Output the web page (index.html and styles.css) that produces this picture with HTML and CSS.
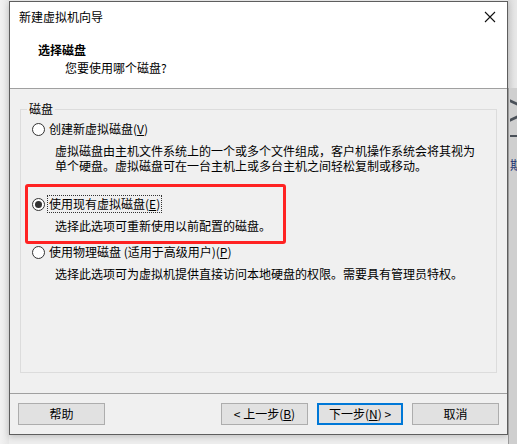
FILE: index.html
```html
<!DOCTYPE html>
<html lang="zh-CN">
<head>
<meta charset="utf-8">
<link rel="stylesheet" href="styles.css">
</head>
<body>
<div class="desk">
  <div class="side-left"></div>
  <div class="win">
    <div class="titlebar">
      <span class="title">新建虚拟机向导</span>
      <svg class="close" width="12" height="12" viewBox="0 0 12 12"><path d="M1 1L11 11M11 1L1 11" stroke="#111" stroke-width="1.1" fill="none"/></svg>
    </div>
    <div class="header">
      <div class="h-title">选择磁盘</div>
      <div class="h-sub">您要使用哪个磁盘?</div>
    </div>
    <div class="content">
      <fieldset class="group">
        <legend>磁盘</legend>
        <div class="group-body">
          <div class="radio-row r1"><span class="radio"></span><span class="lbl">创建新虚拟磁盘(<u>V</u>)</span></div>
          <div class="desc d1">虚拟磁盘由主机文件系统上的一个或多个文件组成，客户机操作系统会将其视为<br>单个硬盘。虚拟磁盘可在一台主机上或多台主机之间轻松复制或移动。</div>
          <div class="radio-row r2"><span class="radio on"></span><span class="lbl focus">使用现有虚拟磁盘(<u>E</u>)</span></div>
          <div class="desc d2">选择此选项可重新使用以前配置的磁盘。</div>
          <div class="radio-row r3"><span class="radio"></span><span class="lbl">使用物理磁盘 (适用于高级用户)(<u>P</u>)</span></div>
          <div class="desc d3">选择此选项可为虚拟机提供直接访问本地硬盘的权限。需要具有管理员特权。</div>
        </div>
      </fieldset>
      <div class="redbox"></div>
    </div>
    <div class="footer">
      <button class="btn help">帮助</button>
      <span class="spacer"></span>
      <button class="btn">&lt; 上一步(<u>B</u>)</button>
      <button class="btn primary">下一步(<u>N</u>) &gt;</button>
      <button class="btn">取消</button>
    </div>
  </div>
  <div class="side-right">
    <div class="sr-top"></div>
    <div class="sr-bar">
      <span class="mark m1"></span>
      <span class="mark m2"></span>
      <span class="mark m3"></span>
      <span class="sr-text">期</span>
    </div>
  </div>
</div>
</body>
</html>
```
FILE: styles.css
```css
* { box-sizing: border-box; }
html, body { margin: 0; padding: 0; }
body {
  width: 517px;
  height: 444px;
  overflow: hidden;
  background: #ededed;
  font-family: "Noto Sans CJK SC", "Microsoft YaHei", sans-serif;
  font-size: 12px;
  color: #000;
}
.desk {
  display: flex;
  height: 444px;
}
.side-left {
  width: 9px;
  background: linear-gradient(to right, #f2f2f2, #e6e6e6);
}
.win {
  width: 499px;
  height: 434px;
  margin-top: 1px;
  border: 1px solid #5e5e5e;
  background: #f0f0f0;
  display: flex;
  flex-direction: column;
  box-shadow: 0 2px 6px rgba(0,0,0,0.18);
  position: relative;
}
.titlebar {
  height: 29px;
  background: #fff;
  display: flex;
  align-items: center;
  padding-left: 9px;
  padding-right: 11px;
}
.title { flex: 1; line-height: 16px; }
.close { display: block; }
.header {
  background: #fff;
  height: 58px;
  padding-top: 10px;
  padding-left: 28px;
  border-bottom: 1px solid #a0a0a0;
}
.h-title { font-weight: bold; line-height: 18px; }
.h-sub { line-height: 18px; padding-left: 27px; }
.content {
  position: relative;
  height: 304px;
  padding: 12px 10px 0 10px;
}
.group {
  margin: 0;
  padding: 0;
  height: 272px;
  border: 1px solid #dcdcdc;
  min-width: 0;
}
.group legend {
  margin-left: 6px;
  padding: 0 2px;
  line-height: 16px;
}
.group-body { padding-left: 11px; }
.radio-row {
  display: flex;
  align-items: center;
  height: 18px;
  line-height: 16px;
}
.r1 { margin-top: 3px; }
.r2 { margin-top: 22px; }
.r3 { margin-top: 10px; }
.radio {
  width: 13px;
  height: 13px;
  border: 1px solid #333;
  border-radius: 50%;
  background: #fff;
  margin-right: 3px;
  display: flex;
  align-items: center;
  justify-content: center;
  flex: none;
}
.radio.on::after {
  content: "";
  width: 7px;
  height: 7px;
  border-radius: 50%;
  background: #333;
}
.lbl { padding: 0 1px; }
.lbl.focus { outline: 1px dotted #333; outline-offset: 0; }
.lbl u, .btn u { text-decoration: underline; text-underline-offset: 1px; }
.desc {
  padding-left: 23px;
  line-height: 15px;
}
.d1 { margin-top: 5px; }
.d2 { margin-top: 5px; }
.d3 { margin-top: 5px; }
.redbox {
  position: absolute;
  left: 15px;
  top: 95px;
  width: 261px;
  height: 60px;
  border: 3px solid #ff2222;
  border-radius: 3px;
}
.footer {
  flex: 1;
  border-top: 1px solid #a0a0a0;
  display: flex;
  align-items: flex-start;
  padding: 9px 8px 0 8px;
  gap: 9px;
}
.spacer { flex: 1; }
.btn {
  width: 87px;
  height: 22px;
  border: 1px solid #adadad;
  background: #e1e1e1;
  font-family: inherit;
  font-size: 12px;
  color: #000;
  padding: 0;
  line-height: 18px;
}
.primary {
  border: 2px solid #0078d7;
  width: 86px;
}
.side-right {
  width: 9px;
  display: flex;
  flex-direction: column;
}
.sr-top {
  height: 88px;
  background: linear-gradient(to right, #dadada, #e8e8e8);
}
.sr-bar {
  flex: 1;
  background: #cfcfcf;
  border-left: 1px solid #9a9a9a;
  position: relative;
  overflow: hidden;
}
.mark {
  position: absolute;
  left: 1px;
  width: 8px;
  height: 3px;
  background: #4a5058;
}
.m1 { top: 13px; transform: skewY(25deg); }
.m2 { top: 29px; transform: skewY(-25deg); }
.m3 { top: 47px; height: 2px; }
.sr-text {
  position: absolute;
  left: 1px;
  top: 70px;
  font-size: 12px;
  color: #203070;
  line-height: 14px;
}
```
